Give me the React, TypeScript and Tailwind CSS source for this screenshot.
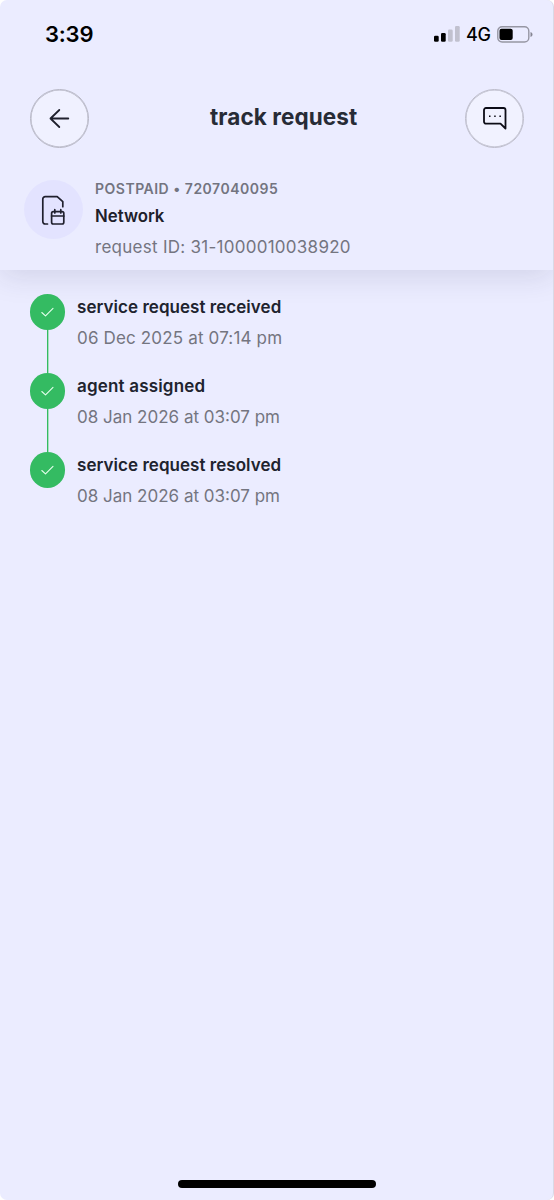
const steps = [
  { title: 'service request received', date: '06 Dec 2025 at 07:14 pm', titleSpacing: 'tracking-[0.04px]', dateSpacing: 'tracking-[0.16px]' },
  { title: 'agent assigned', date: '08 Jan 2026 at 03:07 pm', titleSpacing: 'tracking-[0.18px]', dateSpacing: 'tracking-[0px]' },
  { title: 'service request resolved', date: '08 Jan 2026 at 03:07 pm', titleSpacing: 'tracking-[0.04px]', dateSpacing: 'tracking-[0px]' },
];

function StatusBar() {
  return (
    <div className="flex h-[68px] items-center justify-between pr-[20px] pl-[45px] text-black">
      <span className="text-[22px] leading-[28px] font-semibold tracking-[-0.2px]">3:39</span>
      <div className="flex items-center">
        <svg width="26" height="16" viewBox="0 0 26 16">
          <rect x="0" y="9.7" width="4.7" height="6.1" rx="1.3" fill="#000" />
          <rect x="7" y="7" width="4.7" height="8.8" rx="1.3" fill="#000" />
          <rect x="14" y="3.5" width="4.7" height="12.3" rx="1.3" fill="#c1c1cf" />
          <rect x="21" y="0" width="4.7" height="15.8" rx="1.3" fill="#c1c1cf" />
        </svg>
        <span className="mt-px ml-[6px] w-[25px] text-[18px] leading-[24px] font-medium tracking-[-0.3px] whitespace-nowrap">4G</span>
        <svg className="ml-[6px]" width="36" height="17" viewBox="0 0 36 17">
          <rect x="0.8" y="0.8" width="31" height="15.2" rx="4.3" fill="none" stroke="#9696a3" strokeWidth="1.4" />
          <rect x="2.500" y="2.700" width="13.200" height="11.400" rx="2" fill="#000" />
          <path d="M33.500 6v5c1.300-.5 2-1.400 2-2.500s-.7-2-2-2.500z" fill="#858592" />
        </svg>
      </div>
    </div>
  );
}

export default function App() {
  return (
    <div className="h-[1200px] w-[554px] bg-white">
      <main className="flex h-full flex-col overflow-hidden rounded-[7px] border-r border-[#d9d9e6] bg-[#ebecff] font-['Inter',sans-serif]">
        <header className="h-[270px] shrink-0 shadow-[0_6px_28px_rgba(40,40,80,0.13)]">
          <StatusBar />
          <div className="flex items-center pt-[21px] pl-[30px]">
            <button aria-label="Back" className="flex size-[59px] items-center justify-center rounded-full border border-[#b6b6c4] bg-[#f0f1ff] shadow-[inset_0_0_0_0.500px_#b6b6c4]">
              <svg className="mr-px mb-px" width="24" height="24" viewBox="0 0 24 24" fill="none" stroke="#20212e" strokeWidth="1.800" strokeLinecap="round" strokeLinejoin="round">
                <path d="M21.300 12.500H3.500M12.300 4L3.500 12.500l8.800 8.500" />
              </svg>
            </button>
            <h1 className="mb-[4px] ml-[121px] w-[255px] text-[22.500px] leading-[30px] font-bold tracking-[0.080px] text-[#272b36]">track request</h1>
            <button aria-label="Chat" className="flex size-[59px] items-center justify-center rounded-full border border-[#bcbcca] bg-[#f1f2ff] shadow-[inset_0_0_0_0.500px_#bcbcca]">
              <svg className="mb-[2px]" width="26" height="26" viewBox="0 0 26 26" fill="none" stroke="#0c0c16" strokeWidth="1.800" strokeLinejoin="round">
                <path d="M4 3h17.500a2 2 0 0 1 2 2v18.500l-5-4.800h-14.500a2 2 0 0 1-2-2V5a2 2 0 0 1 2-2z" />
                <path d="M7 11.200h1.500M12.200 11.200h1.500M17.400 11.200h1.500" strokeWidth="1.500" />
              </svg>
            </button>
          </div>
          <section className="flex pt-[32px] pl-[24px]">
            <div className="flex size-[59px] items-center justify-center rounded-full bg-[#e3e3ff]">
              <svg width="26" height="32" viewBox="0 0 26 32" fill="none" stroke="#20202e" strokeWidth="1.700" strokeLinecap="round" strokeLinejoin="round">
                <path d="M6.500 30H4.200a2.400 2.400 0 0 1-2.400-2.400V5a2.400 2.400 0 0 1 2.400-2.400h12l5.600 5.100v5" />
                <rect x="10.600" y="17.700" width="12.200" height="12.300" rx="1.700" />
                <path d="M10.600 22h12.200M13.800 15.700v3.300M19.800 15.700v3.300" />
              </svg>
            </div>
            <div className="ml-[12px]">
              <p className="h-[26px] text-[14px] leading-[17px] font-semibold tracking-[0.5px] text-[#737480]">POSTPAID • 7207040095</p>
              <p className="h-[31px] text-[16.800px] leading-[21px] font-semibold text-[#1d202b]">Network</p>
              <p className="text-[17px] leading-[20px] tracking-[0.27px] text-[#747580]">request ID: 31-1000010038920</p>
            </div>
          </section>
        </header>

        <ol className="pt-[24px] pl-[29.500px]">
          {steps.map((step, index) => (
            <li key={step.title} className="flex h-[79px]">
              <div className="flex w-[35.500px] flex-col items-center">
                <span className="flex size-[35.500px] shrink-0 items-center justify-center rounded-full bg-[#34bb62]">
                  <svg width="14" height="12" viewBox="0 0 14 12" fill="none" stroke="#e5ffed" strokeWidth="1.100" strokeLinecap="round" strokeLinejoin="round">
                    <path d="M1.800 6.500l3.700 3.300L13 2.300" />
                  </svg>
                </span>
                {index < steps.length - 1 && <span className="ml-px w-[2px] flex-1 border-r border-[#a9dfc0] bg-[#34bb62]" />}
              </div>
              <div className="ml-[12px] pt-[3px]">
                <p className={`h-[31px] text-[17px] leading-[20px] font-semibold text-[#20232e] ${step.titleSpacing}`}>{step.title}</p>
                <p className={`text-[17px] leading-[20px] text-[#747580] ${step.dateSpacing}`}>{step.date}</p>
              </div>
            </li>
          ))}
        </ol>
        <div className="mt-auto mb-[12px] ml-[178px] h-[8px] w-[198px] rounded-full bg-black" />
      </main>
    </div>
  );
}
